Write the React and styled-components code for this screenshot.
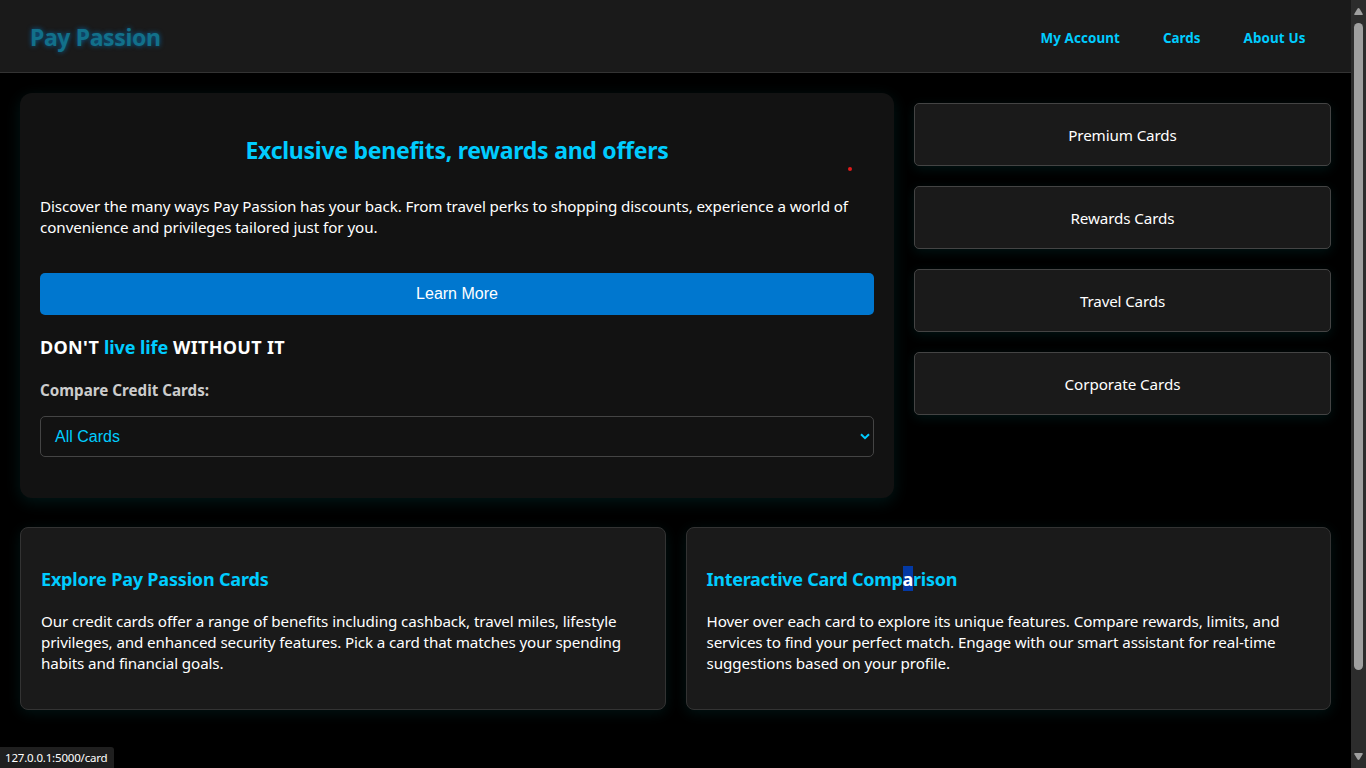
import React from "react";
import styled, { createGlobalStyle } from "styled-components";

const GlobalStyle = createGlobalStyle`
  *, *::before, *::after { box-sizing: border-box; }
  body {
    margin: 0;
    background: #000;
    color: #fff;
    font-family: "Noto Sans", "Open Sans", sans-serif;
    font-size: 15.2px;
    overflow: hidden;
  }
`;

const accent = "#00ccff";
const glow = "0 4px 16px rgba(0, 255, 255, 0.09)";

const Window = styled.div`
  display: flex;
  height: 768px;
`;

const Page = styled.div`
  flex: 1;
  min-width: 0;
`;

const Header = styled.header`
  display: flex;
  align-items: center;
  justify-content: space-between;
  height: 73px;
  padding: 0 45.5px 0 30px;
  background: #1a1a1a;
  border-bottom: 1px solid #333;
`;

const Logo = styled.div`
  margin-top: 1px;
  font-size: 23px;
  font-weight: 700;
  line-height: 32px;
  letter-spacing: -0.366px;
  color: #12708a;
  text-shadow: 0 0 5px rgba(0, 115, 190, 0.75);
`;

const Nav = styled.nav`
  display: flex;
  gap: 43px;
  margin-top: 4px;
`;

const NavLink = styled.a`
  font-size: 13.4px;
  font-weight: 700;
  line-height: 20px;
  letter-spacing: ${(p) => p.$track || 0}px;
  color: ${accent};
`;

const TopSection = styled.section`
  display: grid;
  grid-template-columns: 874px 417px;
  align-items: start;
  gap: 20px;
  padding: 20px 20px 0;
`;

const Promo = styled.div`
  display: flex;
  flex-direction: column;
  height: 405px;
  padding: 41px 20px 20px;
  background: #121212;
  border-radius: 12px;
  box-shadow: ${glow};
`;

const PromoTitle = styled.h2`
  margin: 0;
  font-size: 23px;
  line-height: 32px;
  letter-spacing: -0.258px;
  text-align: center;
  color: ${accent};
`;

const Paragraph = styled.p`
  margin: ${(p) => p.$top}px 0 0;
  line-height: 21px;
`;

const Line = styled.span`
  display: block;
  white-space: nowrap;
  letter-spacing: ${(p) => p.$track || 0}px;
`;

const LearnMore = styled.button`
  height: 42px;
  margin-top: 35px;
  padding: 0;
  border: 0;
  border-radius: 5px;
  background: #0077cf;
  color: #fff;
  font: 16px "Liberation Sans", Arial, sans-serif;
`;

const Slogan = styled.h3`
  margin: 20px 0 0;
  font-size: 18px;
  line-height: 25px;
  letter-spacing: 0.3px;
`;

const Accent = styled.span`
  letter-spacing: -0.1px;
  color: ${accent};
`;

const Label = styled.label`
  margin-top: 20px;
  font-weight: 700;
  line-height: 21px;
  color: #ccc;
`;

const Select = styled.div`
  display: flex;
  align-items: center;
  justify-content: space-between;
  height: 41px;
  margin-top: 15px;
  padding: 0 3px 0 14px;
  border: 1px solid #444;
  border-radius: 5px;
  color: ${accent};
  font: 16px "Liberation Sans", Arial, sans-serif;
`;

const Tiles = styled.div`
  display: grid;
  gap: 20px;
  padding-top: 10px;
`;

const Tile = styled.div`
  display: flex;
  align-items: center;
  justify-content: center;
  height: 63px;
  padding-top: 2px;
  background: #1a1a1a;
  border: 1px solid #444;
  border-radius: 5px;
  box-shadow: 0 3px 12px rgba(0, 255, 255, 0.08);
  line-height: 21px;
  letter-spacing: ${(p) => p.$track}px;
`;

const InfoSection = styled.section`
  display: grid;
  grid-template-columns: 1fr 1fr;
  gap: 20px;
  padding: 29px 20px 0;
`;

const InfoCard = styled.article`
  height: 183px;
  padding: 39px 20px 20px;
  background: #1a1a1a;
  border: 1px solid #333;
  border-radius: 8px;
  box-shadow: 0 3px 14px rgba(0, 255, 255, 0.08);
`;

const InfoTitle = styled.h3`
  margin: 0;
  font-size: 18px;
  line-height: 25px;
  letter-spacing: ${(p) => p.$track}px;
  color: ${accent};
`;

const Selected = styled.span`
  display: inline-block;
  height: 25px;
  margin-top: -1px;
  padding-top: 1px;
  vertical-align: top;
  line-height: 25px;
  background: #0339a5;
  color: #fff;
`;

const Scrollbar = styled.aside`
  display: flex;
  flex-direction: column;
  align-items: center;
  justify-content: space-between;
  width: 15px;
  padding: 8px 0;
  background: #2c2c2c;
`;

const Thumb = styled.div`
  width: 9px;
  height: 647px;
  margin: 8px 0 auto;
  border-radius: 5px;
  background: #9f9f9f;
`;

const StatusBar = styled.div`
  position: fixed;
  left: 0;
  bottom: 0;
  width: 114px;
  height: 21px;
  padding-left: 5px;
  background: #1f1f1f;
  border-top-right-radius: 3px;
  font-size: 11.5px;
  line-height: 21px;
  letter-spacing: -0.181px;
  white-space: nowrap;
`;

const PointerDot = styled.div`
  position: fixed;
  left: 848px;
  top: 166.5px;
  width: 4px;
  height: 4px;
  border-radius: 50%;
  background: #e01b1b;
`;

const Arrow = ({ down }) => (
  <svg width="9" height="7" viewBox="0 0 9 7">
    <path
      d={down ? "M0.8 0H8.2Q9.2 0 8.6 1.2L5.6 6.2Q4.5 7.6 3.4 6.2L0.4 1.2Q-0.2 0 0.8 0Z" : "M0.8 7H8.2Q9.2 7 8.6 5.8L5.6 0.8Q4.5 -0.6 3.4 0.8L0.4 5.8Q-0.2 7 0.8 7Z"}
      fill="#9f9f9f"
    />
  </svg>
);

const tiles = [
  ["Premium Cards", -0.121],
  ["Rewards Cards", -0.108],
  ["Travel Cards", -0.169],
  ["Corporate Cards", -0.052],
];

export default function App() {
  return (
    <>
      <GlobalStyle />
      <Window>
        <Page>
          <Header>
            <Logo>Pay Passion</Logo>
            <Nav>
              <NavLink $track={0.107}>My Account</NavLink>
              <NavLink>Cards</NavLink>
              <NavLink $track={0.132}>About Us</NavLink>
            </Nav>
          </Header>
          <TopSection>
            <Promo>
              <PromoTitle>Exclusive benefits, rewards and offers</PromoTitle>
              <Paragraph $top={30}>
                <Line $track={-0.102}>
                  Discover the many ways Pay Passion has your back. From travel perks to shopping discounts, experience a world of
                </Line>
                <Line $track={-0.073}>convenience and privileges tailored just for you.</Line>
              </Paragraph>
              <LearnMore>Learn More</LearnMore>
              <Slogan>
                DON'T <Accent>live life</Accent> WITHOUT IT
              </Slogan>
              <Label>Compare Credit Cards:</Label>
              <Select>
                All Cards
                <svg width="10" height="7" viewBox="0 0 10 7">
                  <path d="M1 1.2L5 5.2L9 1.2" fill="none" stroke={accent} strokeWidth="2" />
                </svg>
              </Select>
            </Promo>
            <Tiles>
              {tiles.map(([name, track]) => (
                <Tile key={name} $track={track}>{name}</Tile>
              ))}
            </Tiles>
          </TopSection>
          <InfoSection>
            <InfoCard>
              <InfoTitle $track={-0.18}>Explore Pay Passion Cards</InfoTitle>
              <Paragraph $top={19}>
                <Line $track={-0.09}>Our credit cards offer a range of benefits including cashback, travel miles, lifestyle</Line>
                <Line $track={-0.121}>privileges, and enhanced security features. Pick a card that matches your spending</Line>
                <Line $track={-0.108}>habits and financial goals.</Line>
              </Paragraph>
            </InfoCard>
            <InfoCard>
              <InfoTitle $track={-0.27}>
                Interactive Card Comp<Selected>a</Selected>rison
              </InfoTitle>
              <Paragraph $top={19}>
                <Line $track={-0.096}>Hover over each card to explore its unique features. Compare rewards, limits, and</Line>
                <Line $track={-0.108}>services to find your perfect match. Engage with our smart assistant for real-time</Line>
                <Line $track={-0.092}>suggestions based on your profile.</Line>
              </Paragraph>
            </InfoCard>
          </InfoSection>
        </Page>
        <Scrollbar>
          <Arrow />
          <Thumb />
          <Arrow down />
        </Scrollbar>
      </Window>
      <PointerDot />
      <StatusBar>127.0.0.1:5000/card</StatusBar>
    </>
  );
}
